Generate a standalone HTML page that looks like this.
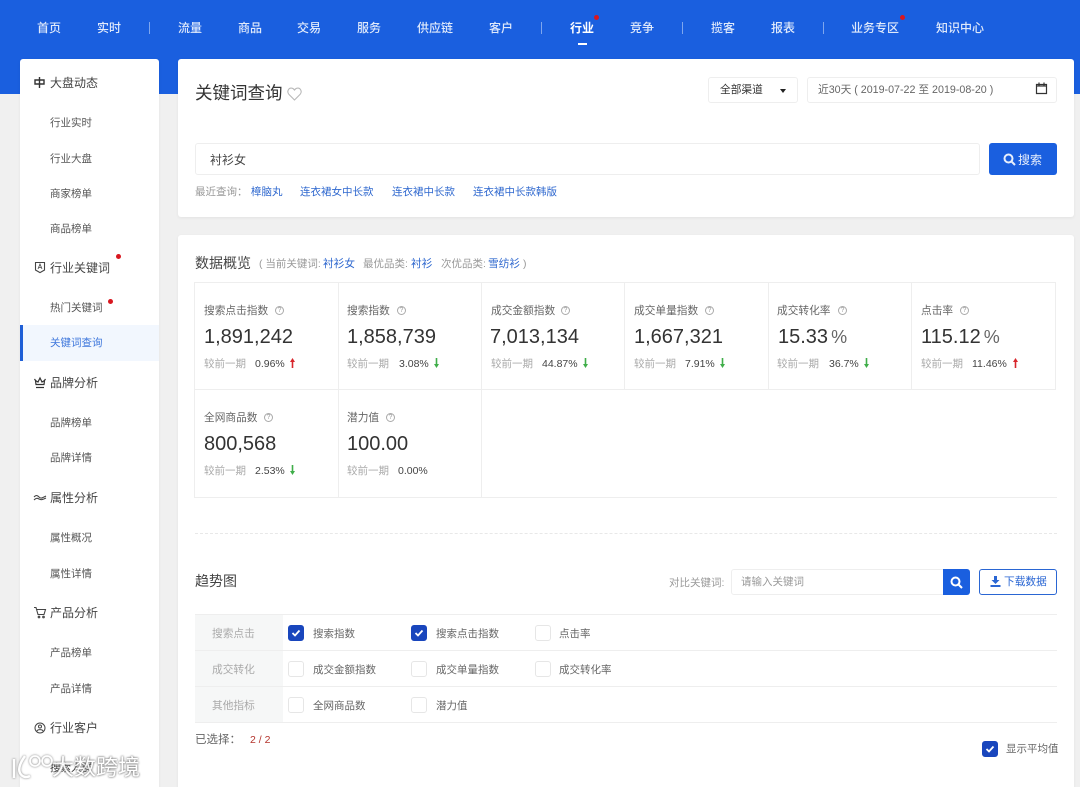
<!DOCTYPE html>
<html lang="zh">
<head>
<meta charset="utf-8">
<title>关键词查询</title>
<style>
*{box-sizing:border-box}
html,body{margin:0;padding:0;width:1080px;height:787px;overflow:hidden}
#p{position:absolute;left:0;top:0;width:1080px;height:787px;overflow:hidden;background:#f0f0f0;font-family:"Liberation Sans","Noto Sans CJK SC",sans-serif;font-size:11px;color:#444}
.a,.t{position:absolute;white-space:nowrap}
.t{line-height:16px}
.nav{color:#dfe9fb;font-size:12px;top:20px;font-weight:500}
.sep{position:absolute;top:22px;width:1px;height:12px;background:#7ea6ee}
.dot{position:absolute;width:5px;height:5px;border-radius:50%;background:#d8171f}
.card{position:absolute;background:#fff;border-radius:3px;box-shadow:0 1px 3px rgba(0,0,0,.06)}
.s1{font-size:12px;color:#444;left:50px}
.s2{font-size:10.500px;color:#555;left:50px}
.blue{color:#2f68cf}
.line{position:absolute;background:#eeeeee}
.lab{font-size:10.700px;color:#666}
.q{position:absolute;width:9px;height:9px;border:1px solid #aaa;border-radius:50%;color:#999;font-size:7px;line-height:7px;text-align:center}
.num{position:absolute;font-size:20px;line-height:24px;color:#333;white-space:nowrap}
.num span{font-size:18px;color:#666;margin-left:3px}
.cmp{font-size:10.500px;color:#aaa}
.val{font-size:10.500px;color:#444}
.cb{position:absolute;width:16px;height:16px;border-radius:3px;border:1px solid #e6e6e6;background:#fff}
.cb.on{background:#1946bd;border-color:#1946bd}
.cb svg{position:absolute;left:2px;top:2px}
.cl{font-size:10.500px;color:#666}
.rh{font-size:10.700px;color:#aaa;left:212px}
.sm{font-size:10.500px;color:#999}
</style>
</head>
<body>
<div id="p">
<div class="a" style="left:0;top:0;width:1080px;height:94px;background:#1a5fdf"></div>

<span class="t nav" style="left:37px">首页</span>
<span class="t nav" style="left:97px">实时</span>
<div class="sep" style="left:149px"></div>
<span class="t nav" style="left:178px">流量</span>
<span class="t nav" style="left:238px">商品</span>
<span class="t nav" style="left:297px">交易</span>
<span class="t nav" style="left:357px">服务</span>
<span class="t nav" style="left:417px">供应链</span>
<span class="t nav" style="left:489px">客户</span>
<div class="sep" style="left:541px"></div>
<span class="t nav" style="left:570px;color:#fff;font-weight:700">行业</span>
<div class="dot" style="left:594px;top:15px"></div>
<div class="a" style="left:578px;top:43px;width:9px;height:2px;background:#fff"></div>
<span class="t nav" style="left:630px">竞争</span>
<div class="sep" style="left:682px"></div>
<span class="t nav" style="left:711px">揽客</span>
<span class="t nav" style="left:771px">报表</span>
<div class="sep" style="left:823px"></div>
<span class="t nav" style="left:851px">业务专区</span>
<div class="dot" style="left:900px;top:15px"></div>
<span class="t nav" style="left:936px">知识中心</span>

<!-- sidebar -->
<div class="card" style="left:20px;top:59px;width:139px;height:760px"></div>
<div class="a" style="left:20px;top:325px;width:139px;height:36px;background:#f2f7fe;border-left:3px solid #1f5fd6"></div>

<svg class="a" style="left:33px;top:76px" width="13" height="13" viewBox="0 0 13 13" fill="none" stroke="#333" stroke-width="1.400"><path d="M6.500 1v11M2 4h9v4H2z"/></svg>
<span class="t s1" style="top:75px">大盘动态</span>
<span class="t s2" style="top:115px">行业实时</span>
<span class="t s2" style="top:151px">行业大盘</span>
<span class="t s2" style="top:186px">商家榜单</span>
<span class="t s2" style="top:221px">商品榜单</span>

<svg class="a" style="left:34px;top:261px" width="12" height="13" viewBox="0 0 12 13" fill="none" stroke="#444" stroke-width="1.100"><path d="M1.500 1.500h9v7.500L6 11.600 1.500 9z"/><path d="M4 8l2-5 2 5M4.800 6.500h2.400" stroke-width=".8"/></svg>
<span class="t s1" style="top:260px">行业关键词</span>
<div class="dot" style="left:116px;top:254px"></div>
<span class="t s2" style="top:300px">热门关键词</span>
<div class="dot" style="left:108px;top:299px"></div>
<span class="t s2" style="top:335px;color:#3f77dc">关键词查询</span>

<svg class="a" style="left:33px;top:376px" width="14" height="13" viewBox="0 0 14 13" fill="none" stroke="#333" stroke-width="1.200"><path d="M2.500 4.500L1.500 3M11.500 4.500l1-1.500M3 8.500L2.500 4.500 5 6 7 2l2 4 2.500-1.500L11 8.500z"/><path d="M3 11.500h8"/></svg>
<span class="t s1" style="top:375px">品牌分析</span>
<span class="t s2" style="top:415px">品牌榜单</span>
<span class="t s2" style="top:450px">品牌详情</span>

<svg class="a" style="left:33px;top:492px" width="14" height="12" viewBox="0 0 14 12" fill="none" stroke="#444" stroke-width="1.100"><path d="M1 5c2-2 3-2 5 0s3 1 7-1M1 8c2-2 3-2 5-1s3 1 7-1"/></svg>
<span class="t s1" style="top:490px">属性分析</span>
<span class="t s2" style="top:530px">属性概况</span>
<span class="t s2" style="top:566px">属性详情</span>

<svg class="a" style="left:33px;top:606px" width="14" height="13" viewBox="0 0 14 13" fill="none" stroke="#444" stroke-width="1.100"><path d="M1 1.500h2l2 7h6l1.500-5H4"/><circle cx="6" cy="11" r=".8"/><circle cx="10.500" cy="11" r=".8"/></svg>
<span class="t s1" style="top:605px">产品分析</span>
<span class="t s2" style="top:645px">产品榜单</span>
<span class="t s2" style="top:681px">产品详情</span>

<svg class="a" style="left:34px;top:722px" width="12" height="12" viewBox="0 0 12 12" fill="none" stroke="#444" stroke-width="1"><circle cx="6" cy="6" r="5"/><circle cx="6" cy="4.500" r="1.500"/><path d="M3 9c.8-1.800 5.200-1.800 6 0"/></svg>
<span class="t s1" style="top:720px">行业客户</span>
<span class="t s2" style="top:760px;color:#333">搜索人群</span>

<!-- main card 1 -->
<div class="card" style="left:178px;top:59px;width:896px;height:158px"></div>
<span class="a" style="left:195px;top:80px;font-size:17.500px;line-height:26px;color:#333">关键词查询</span>
<svg class="a" style="left:287px;top:87px" width="15" height="14" viewBox="0 0 15 14" fill="none" stroke="#b9b9b9" stroke-width="1.100"><path d="M7.500 13L1.800 7.200C-.5 4.500 1.800.8 4.500 1.100c1.300.1 2.300 1 3 2 .7-1 1.700-1.900 3-2 2.700-.3 5 3.400 2.700 6.100z"/></svg>

<div class="a" style="left:708px;top:77px;width:90px;height:26px;border:1px solid #eee;border-radius:3px"></div>
<span class="t" style="left:720px;top:82px;font-size:10.700px;color:#333">全部渠道</span>
<div class="a" style="left:780px;top:89px;border-left:3.500px solid transparent;border-right:3.500px solid transparent;border-top:4px solid #222"></div>
<div class="a" style="left:807px;top:77px;width:250px;height:26px;border:1px solid #eee;border-radius:3px"></div>
<span class="t" style="left:818px;top:82px;font-size:10.700px;color:#666">近30天 ( 2019-07-22 至 2019-08-20 )</span>
<svg class="a" style="left:1035px;top:82px" width="13" height="13" viewBox="0 0 13 13" fill="none" stroke="#333" stroke-width="1.200"><path d="M1.500 2.500h10v9h-10z"/><path d="M1.500 4h10"/><path d="M4 .5v3M9 .5v3"/></svg>

<div class="a" style="left:195px;top:143px;width:785px;height:32px;border:1px solid #eeeeee;border-radius:3px"></div>
<span class="t" style="left:210px;top:152px;font-size:12px;color:#444">衬衫女</span>
<div class="a" style="left:989px;top:143px;width:68px;height:32px;background:#1a5fdf;border-radius:3px"></div>
<svg class="a" style="left:1003px;top:153px" width="13" height="13" viewBox="0 0 13 13" fill="none" stroke="#e8effc" stroke-width="2"><circle cx="5.500" cy="5.500" r="4"/><path d="M8.500 8.500L12 12"/></svg>
<span class="t" style="left:1018px;top:152px;font-size:12px;color:#e8effc">搜索</span>

<span class="t sm" style="left:195px;top:184px">最近查询：</span>
<span class="t blue" style="left:251px;top:184px;font-size:10.500px">樟脑丸</span>
<span class="t blue" style="left:300px;top:184px;font-size:10.500px">连衣裙女中长款</span>
<span class="t blue" style="left:392px;top:184px;font-size:10.500px">连衣裙中长款</span>
<span class="t blue" style="left:473px;top:184px;font-size:10.500px">连衣裙中长款韩版</span>

<!-- main card 2 -->
<div class="card" style="left:178px;top:235px;width:896px;height:570px"></div>
<span class="a" style="left:195px;top:253px;font-size:14px;line-height:20px;color:#444">数据概览</span>
<span class="t sm" style="left:259px;top:256px">( 当前关键词:</span>
<span class="t blue" style="left:323px;top:256px;font-size:10.700px">衬衫女</span>
<span class="t sm" style="left:363px;top:256px">最优品类:</span>
<span class="t blue" style="left:411px;top:256px;font-size:10.700px">衬衫</span>
<span class="t sm" style="left:441px;top:256px">次优品类:</span>
<span class="t blue" style="left:488px;top:256px;font-size:10.700px">雪纺衫</span>
<span class="t sm" style="left:523px;top:256px">)</span>

<!-- grid lines -->
<div class="line" style="left:194px;top:282px;width:861px;height:1px"></div>
<div class="line" style="left:194px;top:389px;width:861px;height:1px"></div>
<div class="line" style="left:194px;top:497px;width:863px;height:1px"></div>
<div class="line" style="left:194px;top:282px;width:1px;height:216px"></div>
<div class="line" style="left:338px;top:282px;width:1px;height:216px"></div>
<div class="line" style="left:481px;top:282px;width:1px;height:216px"></div>
<div class="line" style="left:624px;top:282px;width:1px;height:108px"></div>
<div class="line" style="left:768px;top:282px;width:1px;height:108px"></div>
<div class="line" style="left:911px;top:282px;width:1px;height:108px"></div>
<div class="line" style="left:1055px;top:282px;width:1px;height:108px"></div>

<!-- row 1 -->
<span class="t lab" style="left:204px;top:303px">搜索点击指数</span><div class="q" style="left:275px;top:306px">?</div>
<div class="num" style="left:204px;top:325px">1,891,242</div>
<span class="t cmp" style="left:204px;top:356px">较前一期</span><span class="t val" style="left:255px;top:356px">0.96%</span>
<svg class="a" style="left:289px;top:357px" width="7" height="12" viewBox="0 0 7 12"><path d="M3.500 1L1 5h1.700v6h1.600V5H6z" fill="#d8262c"/></svg>

<span class="t lab" style="left:347px;top:303px">搜索指数</span><div class="q" style="left:397px;top:306px">?</div>
<div class="num" style="left:347px;top:325px">1,858,739</div>
<span class="t cmp" style="left:347px;top:356px">较前一期</span><span class="t val" style="left:399px;top:356px">3.08%</span>
<svg class="a" style="left:433px;top:357px" width="7" height="12" viewBox="0 0 7 12"><path d="M3.500 11L1 7h1.700V1h1.600v6H6z" fill="#3fae49"/></svg>

<span class="t lab" style="left:491px;top:303px">成交金额指数</span><div class="q" style="left:561px;top:306px">?</div>
<div class="num" style="left:490px;top:325px">7,013,134</div>
<span class="t cmp" style="left:491px;top:356px">较前一期</span><span class="t val" style="left:542px;top:356px">44.87%</span>
<svg class="a" style="left:582px;top:357px" width="7" height="12" viewBox="0 0 7 12"><path d="M3.500 11L1 7h1.700V1h1.600v6H6z" fill="#3fae49"/></svg>

<span class="t lab" style="left:634px;top:303px">成交单量指数</span><div class="q" style="left:705px;top:306px">?</div>
<div class="num" style="left:634px;top:325px">1,667,321</div>
<span class="t cmp" style="left:634px;top:356px">较前一期</span><span class="t val" style="left:685px;top:356px">7.91%</span>
<svg class="a" style="left:719px;top:357px" width="7" height="12" viewBox="0 0 7 12"><path d="M3.500 11L1 7h1.700V1h1.600v6H6z" fill="#3fae49"/></svg>

<span class="t lab" style="left:777px;top:303px">成交转化率</span><div class="q" style="left:838px;top:306px">?</div>
<div class="num" style="left:778px;top:325px">15.33<span>%</span></div>
<span class="t cmp" style="left:777px;top:356px">较前一期</span><span class="t val" style="left:829px;top:356px">36.7%</span>
<svg class="a" style="left:863px;top:357px" width="7" height="12" viewBox="0 0 7 12"><path d="M3.500 11L1 7h1.700V1h1.600v6H6z" fill="#3fae49"/></svg>

<span class="t lab" style="left:921px;top:303px">点击率</span><div class="q" style="left:960px;top:306px">?</div>
<div class="num" style="left:921px;top:325px">115.12<span>%</span></div>
<span class="t cmp" style="left:921px;top:356px">较前一期</span><span class="t val" style="left:972px;top:356px">11.46%</span>
<svg class="a" style="left:1012px;top:357px" width="7" height="12" viewBox="0 0 7 12"><path d="M3.500 1L1 5h1.700v6h1.600V5H6z" fill="#d8262c"/></svg>

<!-- row 2 -->
<span class="t lab" style="left:204px;top:410px">全网商品数</span><div class="q" style="left:264px;top:413px">?</div>
<div class="num" style="left:204px;top:432px">800,568</div>
<span class="t cmp" style="left:204px;top:463px">较前一期</span><span class="t val" style="left:255px;top:463px">2.53%</span>
<svg class="a" style="left:289px;top:464px" width="7" height="12" viewBox="0 0 7 12"><path d="M3.500 11L1 7h1.700V1h1.600v6H6z" fill="#3fae49"/></svg>

<span class="t lab" style="left:347px;top:410px">潜力值</span><div class="q" style="left:386px;top:413px">?</div>
<div class="num" style="left:347px;top:432px">100.00</div>
<span class="t cmp" style="left:347px;top:463px">较前一期</span><span class="t val" style="left:398px;top:463px">0.00%</span>

<div class="a" style="left:195px;top:533px;width:862px;border-top:1px dashed #e8e8e8"></div>

<!-- trend -->
<span class="a" style="left:195px;top:571px;font-size:14px;line-height:20px;color:#444">趋势图</span>
<span class="t sm" style="left:669px;top:575px">对比关键词:</span>
<div class="a" style="left:731px;top:569px;width:213px;height:26px;border:1px solid #eee;border-radius:3px 0 0 3px"></div>
<span class="t sm" style="left:741px;top:574px">请输入关键词</span>
<div class="a" style="left:943px;top:569px;width:27px;height:26px;background:#1a5fdf;border-radius:0 3px 3px 0"></div>
<svg class="a" style="left:950px;top:576px" width="13" height="13" viewBox="0 0 13 13" fill="none" stroke="#fff" stroke-width="2"><circle cx="5.500" cy="5.500" r="4"/><path d="M8.500 8.500L12 12"/></svg>
<div class="a" style="left:979px;top:569px;width:78px;height:26px;border:1px solid #2a66d3;border-radius:3px"></div>
<svg class="a" style="left:990px;top:576px" width="11" height="11" viewBox="0 0 11 11" fill="#2a66d3"><path d="M4 0h3v4h2.500L5.500 8 1.500 4H4z"/><path d="M.5 9h10v2H.5z"/></svg>
<span class="t" style="left:1004px;top:574px;font-size:10.700px;color:#2a66d3">下载数据</span>

<div class="a" style="left:195px;top:615px;width:88px;height:108px;background:#f6f7f7"></div>
<div class="line" style="left:195px;top:614px;width:862px;height:1px"></div>
<div class="line" style="left:195px;top:650px;width:862px;height:1px"></div>
<div class="line" style="left:195px;top:686px;width:862px;height:1px"></div>
<div class="line" style="left:195px;top:722px;width:862px;height:1px"></div>

<span class="t rh" style="top:626px">搜索点击</span>
<span class="t rh" style="top:662px">成交转化</span>
<span class="t rh" style="top:698px">其他指标</span>

<div class="cb on" style="left:288px;top:625px"><svg width="10" height="10" viewBox="0 0 10 10" fill="none" stroke="#fff" stroke-width="1.800"><path d="M1.500 5l2.500 2.500 4.500-5"/></svg></div>
<span class="t cl" style="left:313px;top:626px">搜索指数</span>
<div class="cb on" style="left:411px;top:625px"><svg width="10" height="10" viewBox="0 0 10 10" fill="none" stroke="#fff" stroke-width="1.800"><path d="M1.500 5l2.500 2.500 4.500-5"/></svg></div>
<span class="t cl" style="left:436px;top:626px">搜索点击指数</span>
<div class="cb" style="left:535px;top:625px"></div>
<span class="t cl" style="left:559px;top:626px">点击率</span>

<div class="cb" style="left:288px;top:661px"></div>
<span class="t cl" style="left:313px;top:662px">成交金额指数</span>
<div class="cb" style="left:411px;top:661px"></div>
<span class="t cl" style="left:436px;top:662px">成交单量指数</span>
<div class="cb" style="left:535px;top:661px"></div>
<span class="t cl" style="left:559px;top:662px">成交转化率</span>

<div class="cb" style="left:288px;top:697px"></div>
<span class="t cl" style="left:313px;top:698px">全网商品数</span>
<div class="cb" style="left:411px;top:697px"></div>
<span class="t cl" style="left:436px;top:698px">潜力值</span>

<span class="t" style="left:195px;top:732px;font-size:11.500px;color:#666">已选择：</span>
<span class="t" style="left:250px;top:732px;font-size:10.500px;color:#b4342c">2 / 2</span>

<div class="cb on" style="left:982px;top:741px"><svg width="10" height="10" viewBox="0 0 10 10" fill="none" stroke="#fff" stroke-width="1.800"><path d="M1.500 5l2.500 2.500 4.500-5"/></svg></div>
<span class="t cl" style="left:1006px;top:741px">显示平均值</span>

<!-- watermark -->
<svg class="a" style="left:8px;top:750px;filter:drop-shadow(0 0 1px #777)" width="46" height="32" viewBox="0 0 46 32" fill="none" stroke="#fff" stroke-width="2.500"><path d="M6 9v19M17 6C12 13 10 19 12 23c2 4 6 5 10 3"/><circle cx="27" cy="11" r="5" stroke-width="1.800"/><circle cx="39" cy="11" r="5" stroke-width="1.800"/></svg>
<span class="a" style="left:52px;top:754px;font-size:22px;line-height:28px;color:#fff;text-shadow:0 0 2px #777,0 0 2px #777;opacity:.92">大数跨境</span>
</div>
</body>
</html>
